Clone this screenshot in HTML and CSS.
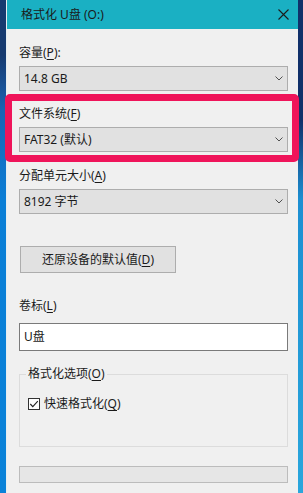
FILE: index.html
```html
<html>
<head>
    <meta charset="UTF-8">
    <title>格式化 U盘 (O:)</title>
    <link rel="stylesheet" href="styles.css">
</head>
<body>

<div class="screen">
    <div class="edge edge-left"></div>
    <div class="window">
        <div class="titlebar">
            <span class="title">格式化 U盘 (O:)</span>
            <svg class="close" width="11" height="11" viewBox="0 0 11 11">
                <path d="M0.5 0.5 L10.5 10.5 M10.5 0.5 L0.5 10.5" stroke="#1c1c1c" stroke-width="1.1" fill="none"/>
            </svg>
        </div>
        <div class="content">
            <div class="field f1">
                <div class="label">容量(<u>P</u>):</div>
                <div class="select"><span>14.8 GB</span><svg class="chev" width="8" height="5" viewBox="0 0 8 5"><path d="M0.5 0.5 L4 4 L7.5 0.5" stroke="#505050" fill="none"/></svg></div>
            </div>
            <div class="field f2">
                <div class="label">文件系统(<u>F</u>)</div>
                <div class="select"><span>FAT32 (默认)</span><svg class="chev" width="8" height="5" viewBox="0 0 8 5"><path d="M0.5 0.5 L4 4 L7.5 0.5" stroke="#505050" fill="none"/></svg></div>
            </div>
            <div class="field f3">
                <div class="label">分配单元大小(<u>A</u>)</div>
                <div class="select"><span>8192 字节</span><svg class="chev" width="8" height="5" viewBox="0 0 8 5"><path d="M0.5 0.5 L4 4 L7.5 0.5" stroke="#505050" fill="none"/></svg></div>
            </div>
            <div class="btn">还原设备的默认值(<u>D</u>)</div>
            <div class="field f4">
                <div class="label">卷标(<u>L</u>)</div>
                <div class="input">U盘</div>
            </div>
            <fieldset class="group">
                <legend>格式化选项(<u>O</u>)</legend>
                <div class="check-row">
                    <svg class="check" width="12" height="12" viewBox="0 0 12 12">
                        <rect x="0.5" y="0.5" width="11" height="11" fill="#fff" stroke="#333"/>
                        <path d="M2.3 6 L4.8 8.6 L9.8 3.2" stroke="#222" stroke-width="1.1" fill="none"/>
                    </svg>
                    <span>快速格式化(<u>Q</u>)</span>
                </div>
            </fieldset>
            <div class="progress"></div>
        </div>
    </div>
    <div class="edge edge-right"></div>
    <div class="highlight"></div>
</div>

</body>
</html>
```

FILE: styles.css
```css
*{ margin:0; padding:0;}
body{font:12px/16px "Noto Sans","Noto Sans CJK SC",sans-serif;color:#1a1a1a;background:#0b7bd4;overflow:hidden;}
u{text-decoration:underline;text-underline-offset:2px;}

.screen{position:relative;display:flex;width:303px;height:493px;overflow:hidden;}
.edge{flex:none;}
.edge-left{width:6px;background:linear-gradient(#163a70 0,#163a70 55px,#1a64b4 110px,#0a7ed6 200px,#0a82d9 100%);}
.edge-right{width:5px;background:linear-gradient(#10306a 0,#10306a 120px,#1c8fd2 200px,#2aa6dc 100%);}

.window{flex:none;width:292px;background:#f0f0f0;border-left:1px solid #e6eef2;box-sizing:border-box;}
.titlebar{height:29px;background:#1ab0c3;display:flex;align-items:center;justify-content:space-between;padding:0 9px 0 14px;}
.title{font-size:12px;line-height:16px;color:#1a1a1a;}
.close{display:block;}

.content{padding:16px 10px 0 12px;}
.label{height:16px;line-height:16px;}
.f2{margin-top:15px;}
.f3{margin-top:16px;}
.f4{margin-top:25px;}

.select{margin-top:5px;height:25px;box-sizing:border-box;background:#e1e1e1;border:1px solid #adadad;display:flex;align-items:center;justify-content:space-between;padding:0 4px 0 4px;}
.chev{display:block;}

.btn{margin:32px 0 0 1px;width:156px;height:27px;box-sizing:border-box;background:#e1e1e1;border:1px solid #adadad;display:flex;align-items:center;justify-content:center;}

.input{margin-top:9px;height:28px;box-sizing:border-box;background:#fff;border:1px solid #7a7a7a;padding:0 4px;display:flex;align-items:center;}

.group{margin-top:15px;border:1px solid #dcdcdc;padding:14px 8px 34px 8px;}
.group legend{padding:0 2px;margin-left:-2px;line-height:16px;}
.check-row{display:flex;align-items:center;gap:4px;height:16px;}
.check{display:block;}

.progress{margin-top:19px;height:17px;box-sizing:border-box;background:#e6e6e6;border:1px solid #bcbcbc;}

.highlight{position:absolute;left:5px;top:94px;width:294px;height:68px;box-sizing:border-box;border:7px solid #ef145a;border-radius:5px;}
```
